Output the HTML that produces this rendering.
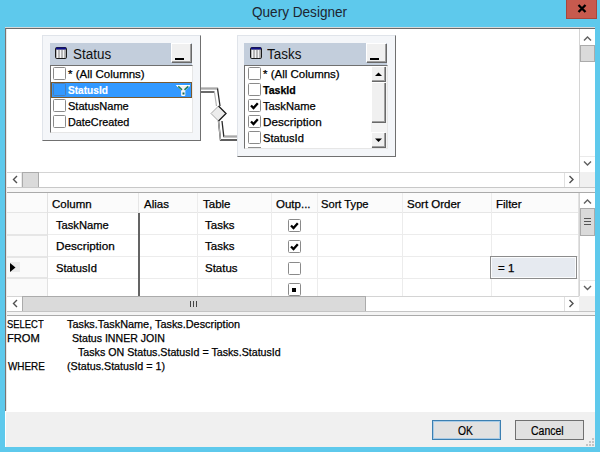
<!DOCTYPE html>
<html><head><meta charset="utf-8">
<style>
*{box-sizing:border-box;margin:0;padding:0}
html,body{width:600px;height:452px;overflow:hidden;background:#5ec9ec;font-family:"Liberation Sans",sans-serif;color:#000}
.a{position:absolute}
.t{position:absolute;white-space:pre;line-height:1;transform-origin:0 0}
.thumb{position:absolute;background:#dadada;border:1px solid #ababab}
.cb{position:absolute;width:13px;height:13px;border:1px solid #8a8a8a;border-radius:1.5px;background:#fff}
.gt{position:absolute;font-size:11.5px;white-space:pre;line-height:1;transform-origin:0 0;color:#000;-webkit-text-stroke:0.25px #000}
.lt{position:absolute;font-size:11.5px;white-space:pre;line-height:1;transform-origin:0 0;color:#000;-webkit-text-stroke:0.25px #000}
.sq{position:absolute;font-size:11.5px;white-space:pre;line-height:1;transform-origin:0 0;color:#000;-webkit-text-stroke:0.25px #000}
.b3{position:absolute;background:#f0f0f0;border-top:1px solid #fff;border-left:1px solid #fff;box-shadow:inset -1px -1px 0 #a0a0a0, 1px 1px 0 #696969}
</style></head><body>
<!-- title -->
<div class="t" style="left:252px;top:5px;font-size:14px;color:#1d2530;transform:scaleX(0.97)">Query Designer</div>
<div class="a" style="left:566px;top:0;width:31px;height:19px;background:#c75a4e;border:1px solid #a8463c;border-top:none"></div>
<svg class="a" style="left:577px;top:4px" width="10" height="9" viewBox="0 0 10 9"><path d="M1.5 1 L8.5 8 M8.5 1 L1.5 8" stroke="#000" stroke-width="2.3"/></svg>

<!-- window frame -->
<div class="a" style="left:5px;top:27px;width:590px;height:1px;background:#d8d8d8"></div>
<div class="a" style="left:5px;top:28px;width:590px;height:1px;background:#6a6a6a"></div>
<div class="a" style="left:5px;top:28px;width:1px;height:383px;background:#7a7472"></div>
<div class="a" style="left:6px;top:29px;width:1px;height:382px;background:#e8e8e8"></div>

<!-- ============ diagram pane ============ -->
<div class="a" style="left:7px;top:29px;width:588px;height:159px;background:#fff"></div>
<!-- v scroll -->
<div class="a" style="left:579px;top:29px;width:1px;height:143px;background:#d4d4d4"></div>
<svg class="a" style="left:580px;top:29px" width="15" height="16"><path d="M4 11.5 L7.5 8 L11 11.5" fill="none" stroke="#606060" stroke-width="1.4"/></svg>
<div class="thumb" style="left:580px;top:45px;width:15px;height:17px"></div>
<div class="a" style="left:580px;top:156px;width:15px;height:1px;background:#eaeaea"></div>
<svg class="a" style="left:580px;top:156px" width="15" height="16"><path d="M4 5.5 L7.5 9 L11 5.5" fill="none" stroke="#606060" stroke-width="1.4"/></svg>
<!-- h scroll -->
<div class="a" style="left:7px;top:172px;width:573px;height:1px;background:#d4d4d4"></div>
<div class="a" style="left:7px;top:187px;width:573px;height:1px;background:#d4d4d4"></div>
<svg class="a" style="left:7px;top:172px" width="15" height="15"><path d="M10 4 L6.5 7.5 L10 11" fill="none" stroke="#505050" stroke-width="1.4"/></svg>
<div class="a" style="left:21px;top:173px;width:1px;height:14px;background:#eaeaea"></div>
<div class="thumb" style="left:22px;top:172px;width:17px;height:16px"></div>
<div class="a" style="left:564px;top:173px;width:1px;height:14px;background:#e0e0e0"></div>
<svg class="a" style="left:564px;top:172px" width="15" height="15"><path d="M5.5 4 L9 7.5 L5.5 11" fill="none" stroke="#505050" stroke-width="1.4"/></svg>
<div class="a" style="left:579px;top:172px;width:1px;height:16px;background:#d4d4d4"></div>
<div class="a" style="left:580px;top:172px;width:15px;height:16px;background:#f0f0f0"></div>

<!-- connector -->
<svg class="a" style="left:195px;top:80px" width="50" height="70" viewBox="195 80 50 70">
  <g fill="none">
  <path d="M200 88.5 H217.5 L220 106" stroke="#2a2a2a" stroke-width="1.3"/>
  <path d="M200 88.5 H217.5" stroke="#a8a8a8" stroke-width="1.2"/>
  <path d="M200 92 H214.5" stroke="#2a2a2a" stroke-width="1.4"/>
  <path d="M214.5 92.5 L216.5 106" stroke="#b4b4b4" stroke-width="1.2"/>
  <path d="M218.5 121 L220.5 140 H237" stroke="#2a2a2a" stroke-width="1.4"/>
  <path d="M218.5 121 L220.5 140" stroke="#b4b4b4" stroke-width="1.2"/>
  <path d="M222 121 L223.8 136.5 H237" stroke="#2a2a2a" stroke-width="1.3"/>
  <path d="M223.8 136.5 H237" stroke="#a8a8a8" stroke-width="1.2"/>
  </g>
  <path d="M218.5 106 L226 113.5 L218.5 121 L211 113.5 Z" fill="#ececec" stroke="#a8a8a8" stroke-width="1"/>
  <path d="M218.5 106 L226 113.5 L218.5 121" fill="none" stroke="#222" stroke-width="1.3"/>
</svg>

<!-- Status table box -->
<div class="a" style="left:42px;top:35px;width:159px;height:106px;background:#f4f6f9;border:1px solid #e0e4ea;border-right:1px solid #707070;border-bottom:1px solid #707070"></div>
<div class="a" style="left:50px;top:43px;width:142px;height:22px;background:#c3cedc"></div>
<svg class="a" style="left:55px;top:47px" width="12" height="12" viewBox="0 0 12 12"><rect x="0.5" y="0.5" width="11" height="11" rx="1.2" fill="#a8a8a8" stroke="#1a1a1a"/><rect x="1" y="0.5" width="10" height="2" fill="#10108a"/><path d="M2.5 3v8M5.5 3v8M8.5 3v8" stroke="#f4f4f4" stroke-width="1.4"/></svg>
<div class="t" style="left:73px;top:47px;font-size:14px;color:#111;transform:scaleX(0.96)">Status</div>
<div class="b3" style="left:171px;top:43px;width:20px;height:19px"></div>
<div class="a" style="left:175px;top:58px;width:9px;height:2px;background:#000"></div>
<div class="a" style="left:50px;top:65px;width:143px;height:68px;background:#fff;border-left:1px solid #707070;border-top:1px solid #707070;border-right:1px solid #e6e6e6;border-bottom:1px solid #e6e6e6"></div>
<div class="cb" style="left:53px;top:67px"></div>
<div class="lt" style="left:68px;top:69px">* (All Columns)</div>
<div class="a" style="left:51px;top:82px;width:141px;height:16px;background:#3399ff;border:1px solid #7a5a30"></div>
<div class="cb" style="left:53px;top:83px;background:#3399ff;border-color:#4a7fb8"></div>
<div class="lt" style="left:68px;top:85px;color:#fff;-webkit-text-stroke:0.2px #fff;font-weight:bold;transform:scaleX(0.88)">StatusId</div>
<svg class="a" style="left:176px;top:85px" width="15" height="11" viewBox="0 0 15 11"><path d="M0.5 0.5 H14 L8.8 5.5 V10.5 H5.7 V5.5 Z" fill="#f4f0f0" stroke="#fff" stroke-width="1"/><path d="M2.2 1.3 L6 4.8 M12.3 1.3 L8.5 4.8" stroke="#1f7f60" stroke-width="1.6"/><rect x="6.5" y="7.5" width="2" height="2" fill="#1a6a50"/></svg>
<div class="cb" style="left:53px;top:99px"></div>
<div class="lt" style="left:68px;top:101px;transform:scaleX(0.96)">StatusName</div>
<div class="cb" style="left:53px;top:115px"></div>
<div class="lt" style="left:68px;top:117px;transform:scaleX(0.94)">DateCreated</div>

<!-- Tasks table box -->
<div class="a" style="left:237px;top:35px;width:159px;height:122px;background:#f4f6f9;border:1px solid #e0e4ea;border-right:1px solid #707070;border-bottom:1px solid #707070"></div>
<div class="a" style="left:244px;top:43px;width:143px;height:22px;background:#c3cedc"></div>
<svg class="a" style="left:250px;top:47px" width="12" height="12" viewBox="0 0 12 12"><rect x="0.5" y="0.5" width="11" height="11" rx="1.2" fill="#a8a8a8" stroke="#1a1a1a"/><rect x="1" y="0.5" width="10" height="2" fill="#10108a"/><path d="M2.5 3v8M5.5 3v8M8.5 3v8" stroke="#f4f4f4" stroke-width="1.4"/></svg>
<div class="t" style="left:267px;top:47px;font-size:14px;color:#111;transform:scaleX(0.96)">Tasks</div>
<div class="b3" style="left:366px;top:43px;width:20px;height:19px"></div>
<div class="a" style="left:370px;top:58px;width:9px;height:2px;background:#000"></div>
<div class="a" style="left:244px;top:65px;width:144px;height:84px;background:#fff;border-left:1px solid #707070;border-top:1px solid #707070;border-right:1px solid #e6e6e6;border-bottom:1px solid #e6e6e6;overflow:hidden"></div>
<div class="cb" style="left:248px;top:67px"></div>
<div class="lt" style="left:263px;top:69px">* (All Columns)</div>
<div class="cb" style="left:248px;top:83px"></div>
<div class="lt" style="left:263px;top:85px;font-weight:bold;transform:scaleX(0.92)">TaskId</div>
<div class="cb" style="left:248px;top:99px"></div>
<svg class="a" style="left:249px;top:100px" width="11" height="11"><path d="M2 5.5 L4.5 8 L8.8 3.3" fill="none" stroke="#000" stroke-width="2.3"/></svg>
<div class="lt" style="left:263px;top:101px;transform:scaleX(0.97)">TaskName</div>
<div class="cb" style="left:248px;top:115px"></div>
<svg class="a" style="left:249px;top:116px" width="11" height="11"><path d="M2 5.5 L4.5 8 L8.8 3.3" fill="none" stroke="#000" stroke-width="2.3"/></svg>
<div class="lt" style="left:263px;top:117px;transform:scaleX(1.02)">Description</div>
<div class="cb" style="left:248px;top:131px"></div>
<div class="lt" style="left:263px;top:133px;transform:scaleX(0.97)">StatusId</div>
<div class="a" style="left:248px;top:147px;width:13px;height:1px;background:#8e8f8f"></div>
<!-- tasks list scrollbar -->
<div class="a" style="left:371px;top:66px;width:16px;height:82px;background:#f4f4f4"></div>
<div class="b3" style="left:371px;top:66px;width:14px;height:15px"></div>
<svg class="a" style="left:371px;top:66px" width="15" height="15"><path d="M4 10 L7.5 6.5 L11 10 Z" fill="#000"/></svg>
<div class="b3" style="left:371px;top:82px;width:14px;height:40px"></div>
<div class="b3" style="left:371px;top:132px;width:14px;height:15px"></div>
<svg class="a" style="left:371px;top:132px" width="15" height="15"><path d="M4 6.5 L7.5 10 L11 6.5 Z" fill="#000"/></svg>

<!-- ============ splitter 1 ============ -->
<div class="a" style="left:7px;top:187px;width:588px;height:1px;background:#c8c8c8"></div>
<div class="a" style="left:7px;top:188px;width:588px;height:4px;background:#f6f6f6"></div>
<div class="a" style="left:7px;top:192px;width:588px;height:1px;background:#aaaaaa"></div>

<!-- ============ grid pane ============ -->
<div class="a" style="left:7px;top:193px;width:588px;height:118px;background:#fff"></div>
<!-- header -->
<div class="a" style="left:7px;top:193px;width:571px;height:20px;background:#fbfbfb"></div>
<div class="a" style="left:7px;top:212px;width:571px;height:1px;background:#e6e6e6"></div>
<div class="a" style="left:47px;top:193px;width:1px;height:103px;background:#e2e2e2"></div>
<div class="a" style="left:138px;top:193px;width:1px;height:20px;background:#e6e6e6"></div>
<div class="a" style="left:197px;top:193px;width:1px;height:103px;background:#ececec"></div>
<div class="a" style="left:271px;top:193px;width:1px;height:103px;background:#ececec"></div>
<div class="a" style="left:317px;top:193px;width:1px;height:103px;background:#ececec"></div>
<div class="a" style="left:402px;top:193px;width:1px;height:103px;background:#ececec"></div>
<div class="a" style="left:491px;top:193px;width:1px;height:103px;background:#ececec"></div>
<div class="a" style="left:578px;top:193px;width:1px;height:103px;background:#e2e2e2"></div>
<div class="gt" style="left:52px;top:199px">Column</div>
<div class="gt" style="left:144px;top:199px">Alias</div>
<div class="gt" style="left:203px;top:199px">Table</div>
<div class="gt" style="left:276px;top:199px">Outp...</div>
<div class="gt" style="left:321px;top:199px;transform:scaleX(0.97)">Sort Type</div>
<div class="gt" style="left:407px;top:199px">Sort Order</div>
<div class="gt" style="left:496px;top:199px">Filter</div>
<!-- rows -->
<div class="a" style="left:7px;top:213px;width:40px;height:83px;background:#fafafa"></div>
<div class="a" style="left:7px;top:234px;width:40px;height:2px;background:#e6e6e6"></div>
<div class="a" style="left:7px;top:256px;width:40px;height:2px;background:#e6e6e6"></div>
<div class="a" style="left:7px;top:277px;width:40px;height:2px;background:#e6e6e6"></div>
<div class="a" style="left:48px;top:234px;width:530px;height:1px;background:#ececec"></div>
<div class="a" style="left:48px;top:256px;width:530px;height:1px;background:#ececec"></div>
<div class="a" style="left:48px;top:278px;width:530px;height:1px;background:#ececec"></div>
<div class="a" style="left:138px;top:213px;width:2px;height:83px;background:#646464"></div>
<div class="a" style="left:10px;top:262px;width:10px;height:10px;background:#ececec"></div>
<svg class="a" style="left:10px;top:263px" width="6" height="9"><path d="M0 0 L5.5 4.5 L0 9 Z" fill="#000"/></svg>
<div class="gt" style="left:56px;top:220px;transform:scaleX(0.97)">TaskName</div>
<div class="gt" style="left:205px;top:220px">Tasks</div>
<div class="gt" style="left:56px;top:241px;transform:scaleX(1.02)">Description</div>
<div class="gt" style="left:205px;top:241px">Tasks</div>
<div class="gt" style="left:56px;top:263px;transform:scaleX(0.97)">StatusId</div>
<div class="gt" style="left:205px;top:263px">Status</div>
<div class="cb" style="left:288px;top:219px"></div>
<svg class="a" style="left:289px;top:220px" width="11" height="11"><path d="M2 5.5 L4.5 8 L8.8 3.3" fill="none" stroke="#000" stroke-width="2.3"/></svg>
<div class="cb" style="left:288px;top:240px"></div>
<svg class="a" style="left:289px;top:241px" width="11" height="11"><path d="M2 5.5 L4.5 8 L8.8 3.3" fill="none" stroke="#000" stroke-width="2.3"/></svg>
<div class="cb" style="left:288px;top:262px"></div>
<div class="cb" style="left:288px;top:283px"></div>
<div class="a" style="left:292px;top:288px;width:4px;height:4px;background:#000"></div>
<!-- filter cell -->
<div class="a" style="left:490px;top:256px;width:87px;height:23px;background:#e6eaf0;border:1px solid #8c8c8c;box-shadow:inset 0 0 0 1px #fbfcfd"></div>
<div class="gt" style="left:498px;top:263px">= 1</div>
<!-- grid v scroll -->
<div class="a" style="left:579px;top:193px;width:1px;height:103px;background:#d4d4d4"></div>
<svg class="a" style="left:580px;top:193px" width="15" height="16"><path d="M4 10.5 L7.5 7 L11 10.5" fill="none" stroke="#606060" stroke-width="1.4"/></svg>
<div class="thumb" style="left:580px;top:208px;width:15px;height:28px"></div>
<div class="a" style="left:584px;top:218px;width:7px;height:1px;background:#555"></div>
<div class="a" style="left:584px;top:221px;width:7px;height:1px;background:#555"></div>
<div class="a" style="left:584px;top:224px;width:7px;height:1px;background:#555"></div>
<div class="a" style="left:580px;top:280px;width:15px;height:1px;background:#eaeaea"></div>
<svg class="a" style="left:580px;top:280px" width="15" height="16"><path d="M4 6 L7.5 9.5 L11 6" fill="none" stroke="#606060" stroke-width="1.4"/></svg>
<!-- grid h scroll -->
<div class="a" style="left:7px;top:296px;width:573px;height:1px;background:#d4d4d4"></div>
<div class="a" style="left:7px;top:311px;width:573px;height:1px;background:#d4d4d4"></div>
<svg class="a" style="left:7px;top:296px" width="15" height="15"><path d="M10 4 L6.5 7.5 L10 11" fill="none" stroke="#505050" stroke-width="1.4"/></svg>
<div class="thumb" style="left:22px;top:296px;width:344px;height:16px"></div>
<div class="a" style="left:190px;top:301px;width:1px;height:6px;background:#444"></div>
<div class="a" style="left:193px;top:301px;width:1px;height:6px;background:#444"></div>
<div class="a" style="left:196px;top:301px;width:1px;height:6px;background:#444"></div>
<div class="a" style="left:564px;top:297px;width:1px;height:14px;background:#e0e0e0"></div>
<svg class="a" style="left:564px;top:296px" width="15" height="15"><path d="M5.5 4 L9 7.5 L5.5 11" fill="none" stroke="#505050" stroke-width="1.4"/></svg>
<div class="a" style="left:579px;top:296px;width:16px;height:16px;background:#f0f0f0"></div>

<!-- ============ splitter 2 ============ -->
<div class="a" style="left:7px;top:311px;width:588px;height:1px;background:#c4c4c4"></div>
<div class="a" style="left:7px;top:312px;width:588px;height:3px;background:#f4f4f4"></div>
<div class="a" style="left:7px;top:315px;width:588px;height:1px;background:#aaaaaa"></div>

<!-- ============ SQL pane ============ -->
<div class="a" style="left:7px;top:316px;width:588px;height:95px;background:#fff"></div>
<div class="sq" style="left:7px;top:319px;transform:scaleX(0.82)">SELECT</div>
<div class="sq" style="left:67px;top:319px;transform:scaleX(0.945)">Tasks.TaskName, Tasks.Description</div>
<div class="sq" style="left:7px;top:333px;transform:scaleX(0.97)">FROM</div>
<div class="sq" style="left:72px;top:333px;transform:scaleX(0.92)">Status INNER JOIN</div>
<div class="sq" style="left:78px;top:347px;transform:scaleX(0.927)">Tasks ON Status.StatusId = Tasks.StatusId</div>
<div class="sq" style="left:8px;top:361px;transform:scaleX(0.86)">WHERE</div>
<div class="sq" style="left:67px;top:361px;transform:scaleX(0.933)">(Status.StatusId = 1)</div>

<!-- ============ footer ============ -->
<div class="a" style="left:5px;top:411px;width:590px;height:36px;background:#f0f0f0;border-top:1px solid #fff;border-left:1px solid #fff"></div>
<div class="a" style="left:432px;top:420px;width:69px;height:20px;background:#e1e1e1;border:1px solid #3c7fb1;box-shadow:inset 0 0 0 1px #a8cbe6"></div>
<div class="t" style="left:458px;top:425px;font-size:12px;-webkit-text-stroke:0.2px #000;transform:scaleX(0.86)">OK</div>
<div class="a" style="left:515px;top:420px;width:69px;height:20px;background:#e1e1e1;border:1px solid #707070"></div>
<div class="t" style="left:531px;top:425px;font-size:12px;-webkit-text-stroke:0.2px #000;transform:scaleX(0.875)">Cancel</div>
<svg class="a" style="left:583px;top:436px" width="12" height="11"><g fill="#c4c4c4"><rect x="9" y="2" width="2" height="2"/><rect x="6" y="5" width="2" height="2"/><rect x="9" y="5" width="2" height="2"/><rect x="3" y="8" width="2" height="2"/><rect x="6" y="8" width="2" height="2"/><rect x="9" y="8" width="2" height="2"/></g></svg>
</body></html>
